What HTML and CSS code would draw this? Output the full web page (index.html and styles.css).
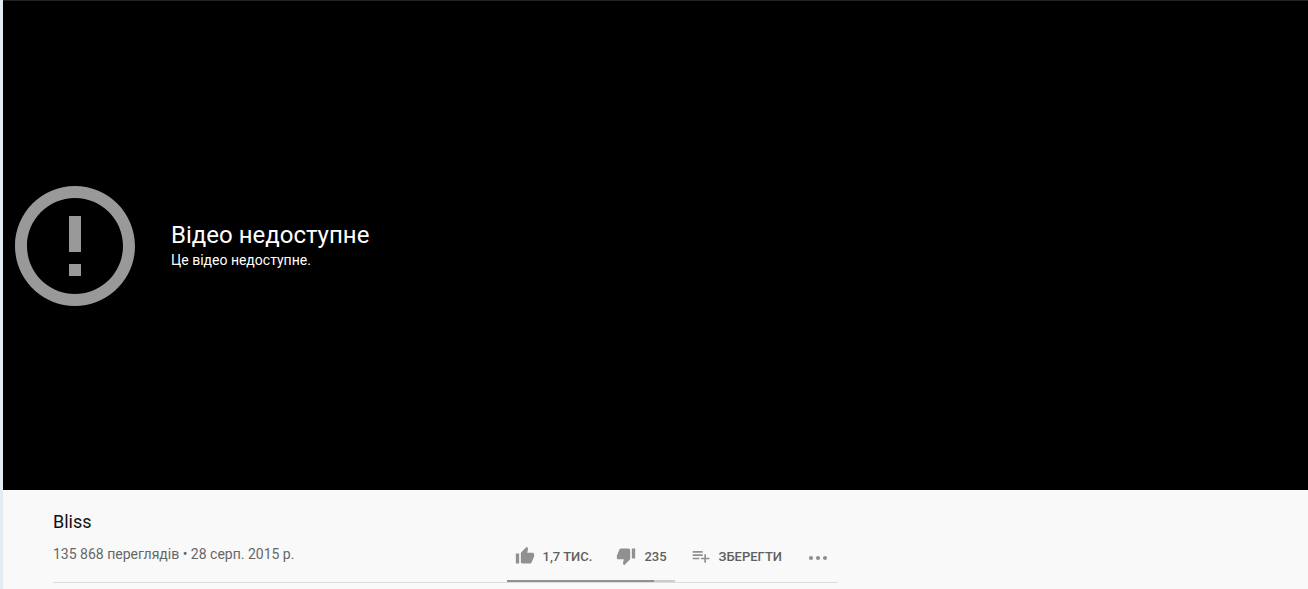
FILE: index.html
```
<!DOCTYPE html>
<html lang="uk">
<head>
  <meta charset="UTF-8">
  <meta name="viewport" content="width=device-width, initial-scale=1.0">
  <title>Bliss</title>
  <link rel="stylesheet" href="styles.css">
</head>
<body>
  <!-- player -->
  <div class="player">
    <svg class="error-icon" viewBox="0 0 24 24" aria-hidden="true">
      <path d="M11 15h2v2h-2zm0-8h2v6h-2zm.99-5C6.47 2 2 6.48 2 12s4.47 10 9.99 10C17.52 22 22 17.52 22 12S17.52 2 11.99 2zM12 20c-4.42 0-8-3.58-8-8s3.58-8 8-8 8 3.58 8 8-3.58 8-8 8z"/>
    </svg>
    <div class="error-text">
      <p class="reason">Відео недоступне</p>
      <p class="subreason">Це відео недоступне.</p>
    </div>
  </div>
  <!-- video info -->
  <div class="info">
    <h1 class="title">Bliss</h1>
    <div class="bar">
      <p class="meta">135 868 переглядів • 28 серп. 2015 р.</p>
      <div class="menu">
        <div class="rating">
          <div class="votes">
            <button type="button" class="btn">
              <svg class="icon" viewBox="0 0 24 24" aria-hidden="true"><path d="M1 21h4V9H1v12zm22-11c0-1.1-.9-2-2-2h-6.31l.95-4.57.03-.32c0-.41-.17-.79-.44-1.06L14.17 1 7.59 7.59C7.22 7.95 7 8.45 7 9v10c0 1.1.9 2 2 2h9c.83 0 1.54-.5 1.84-1.22l3.02-7.05c.09-.23.14-.47.14-.73v-2z"/></svg>
              1,7 ТИС.
            </button>
            <button type="button" class="btn">
              <svg class="icon" viewBox="0 0 24 24" aria-hidden="true"><path d="M15 3H6c-.83 0-1.54.5-1.84 1.22l-3.02 7.05c-.09.23-.14.47-.14.73v2c0 1.1.9 2 2 2h6.31l-.95 4.57-.03.32c0 .41.17.79.44 1.06L9.83 23l6.59-6.59c.36-.36.58-.86.58-1.41V5c0-1.1-.9-2-2-2zm4 0v12h4V3h-4z"/></svg>
              235
            </button>
          </div>
          <div class="sentiment"><div class="likes"></div></div>
        </div>
        <button type="button" class="btn">
          <svg class="icon" viewBox="0 0 24 24" aria-hidden="true"><path d="M14 10H2v2h12v-2zm0-4H2v2h12V6zm4 8v-4h-2v4h-4v2h4v4h2v-4h4v-2h-4zM2 16h8v-2H2v2z"/></svg>
          ЗБЕРЕГТИ
        </button>
        <button type="button" class="btn more" aria-label="Інші дії">
          <svg class="dots" viewBox="0 0 28 28" aria-hidden="true"><circle cx="7" cy="14" r="2.1"/><circle cx="14" cy="14" r="2.1"/><circle cx="21" cy="14" r="2.1"/></svg>
        </button>
      </div>
    </div>
  </div>
</body>
</html>
```
FILE: styles.css
```
* {
  margin: 0;
  padding: 0;
  box-sizing: border-box;
}
body {
  display: flex;
  flex-direction: column;
  min-height: 100vh;
  border-left: 3px solid #e4ebf3;
  background-color: #f9f9f9;
  font-family: Roboto, "Noto Sans", sans-serif;
}
/* player */
.player {
  display: flex;
  flex: 1;
  align-items: center;
  gap: 24px;
  border-top: 1px solid #222;
  background-color: #000;
  color: #fff;
}
.error-icon {
  width: 144px;
  height: 144px;
  fill: #999;
}
.error-text {
  padding-bottom: 4px;
}
.reason {
  font-size: 24px;
  line-height: 32px;
}
.subreason {
  font-size: 14px;
  line-height: 18px;
}
/* video info */
.info {
  padding: 20px 50px 6px;
}
.title {
  color: #111;
  font-size: 18px;
  font-weight: 400;
  line-height: 24px;
}
.bar {
  display: flex;
  justify-content: space-between;
  max-width: 785px;
  border-bottom: 1px solid #ddd;
}
.meta {
  padding-top: 10px;
  color: #666;
  font-size: 14px;
  line-height: 20px;
}
.menu {
  display: flex;
  align-items: flex-start;
  gap: 8px;
}
.votes {
  display: flex;
  gap: 8px;
}
.btn {
  display: flex;
  align-items: center;
  gap: 8px;
  height: 46px;
  padding: 0 8px;
  border: none;
  background: none;
  color: #606060;
  font: 500 13px/20px Roboto, "Noto Sans", sans-serif;
  cursor: pointer;
}
.icon {
  width: 20px;
  height: 20px;
  margin-bottom: 2px;
  fill: #909090;
}
.more {
  padding: 2px 6px 0;
}
.dots {
  width: 28px;
  height: 28px;
  fill: #909090;
}
/* like / dislike ratio */
.sentiment {
  height: 2px;
  background-color: #ccc;
}
.likes {
  width: 88%;
  height: 2px;
  background-color: #909090;
}
```
